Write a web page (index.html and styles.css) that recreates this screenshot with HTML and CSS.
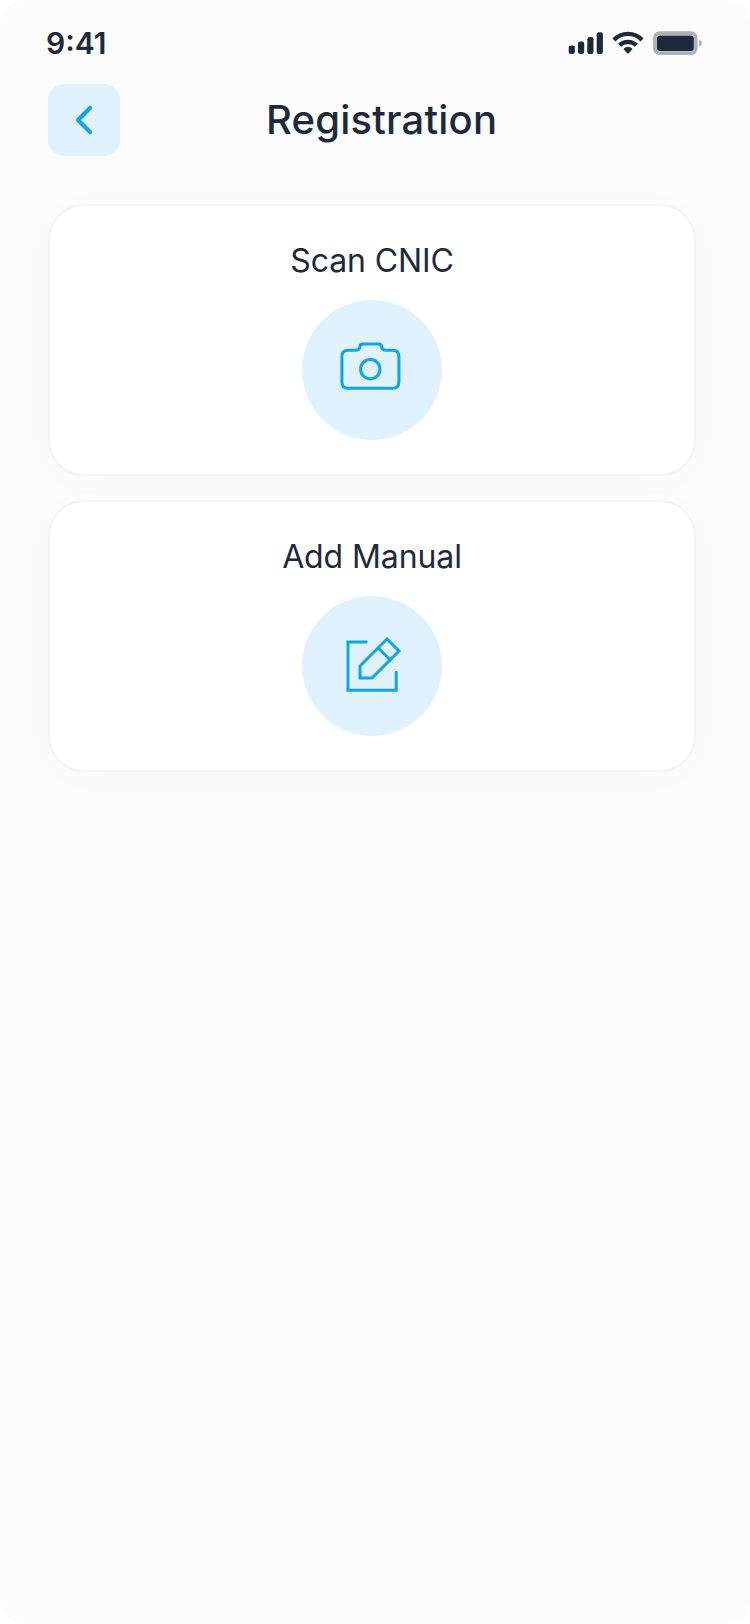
FILE: index.html
```html
<!DOCTYPE html>
<html lang="en">
<head>
<meta charset="utf-8">
<title>Registration</title>
<link rel="stylesheet" href="styles.css">
</head>
<body>
<div class="screen">
  <div class="status-bar">
    <span class="time">9:41</span>
    <svg class="status-icons" width="136" height="26" viewBox="568 30 136 26">
      <g fill="#1e293b">
        <rect x="568.7" y="45.5" width="6.2" height="8.500" rx="2.200"/>
        <rect x="578" y="41.500" width="6.200" height="12.500" rx="2.200"/>
        <rect x="587.300" y="37" width="6.200" height="17" rx="2.200"/>
        <rect x="596.700" y="32.200" width="6.200" height="21.800" rx="2.200"/>
        <path d="M623.800 49Q628 45.400 632.200 49L628.600 53Q628 53.700 627.400 53Z" stroke="#1e293b" stroke-width=".8" stroke-linejoin="round"/>
        <rect x="657" y="35.600" width="37" height="15.400" rx="3"/>
      </g>
      <g fill="none" stroke="#1e293b" stroke-width="4.300">
        <path d="M614 40A19 19 0 0 1 642 40"/>
        <path d="M619.600 45.300A12 12 0 0 1 636.400 45.300"/>
      </g>
      <rect x="655" y="33.200" width="40.600" height="20" rx="4.500" fill="none" stroke="#adb1b9" stroke-width="3.800"/>
      <path d="M699.200 39.600Q702 40.700 702 43.100Q702 45.600 699.200 46.800Z" fill="#adb1b9"/>
    </svg>
  </div>
  <header class="header">
    <button class="back" aria-label="Back">
      <svg width="24" height="36" viewBox="0 0 24 36"><path d="M18 6L6 18L18 30" fill="none" stroke="#0ea5e9" stroke-width="4.200" stroke-linecap="round" stroke-linejoin="round"/></svg>
    </button>
    <h1 class="title">Registration</h1>
  </header>
  <main class="options">
    <section class="card">
      <h2 class="label">Scan CNIC</h2>
      <div class="circle">
        <svg width="140" height="140" viewBox="302 300 140 140" fill="none" stroke="#0ea5e9" stroke-width="3">
          <path d="M348 350.200H355Q359.800 350.200 359.800 347Q359.800 343.900 363 343.900H378.500Q381.700 343.900 381.700 347Q381.700 350.200 386.500 350.200H392.500Q398.900 350.200 398.900 356.500V382Q398.900 388.200 392.500 388.200H348Q341.900 388.200 341.900 382V356.500Q341.900 350.200 348 350.200Z"/>
          <circle cx="370.300" cy="369.200" r="9.700"/>
        </svg>
      </div>
    </section>
    <section class="card">
      <h2 class="label">Add Manual</h2>
      <div class="circle">
        <svg width="140" height="140" viewBox="302 596 140 140" fill="none" stroke="#0ea5e9" stroke-width="3" stroke-linejoin="miter" stroke-linecap="round">
          <path d="M366.200 642H348V690.200H396.200V672.200"/>
          <path d="M387 639L399 651L372 678H360V666ZM378.200 648L390 659.800"/>
        </svg>
      </div>
    </section>
  </main>
</div>
</body>
</html>
```
FILE: styles.css
```css
* { box-sizing: border-box; }
body {
  margin: 0;
  background: #fff;
  color: #1e293b;
  font-family: Inter, "Liberation Sans", sans-serif;
}
.screen {
  width: 750px;
  height: 1624px;
  background: #fcfcfc;
  border-radius: 24px;
  overflow: hidden;
}
.status-bar {
  display: flex;
  justify-content: space-between;
  align-items: center;
  height: 84px;
  padding: 2px 46px 0 46px;
}
.time {
  font-size: 30px;
  font-weight: 600;
  line-height: 36px;
}
.header {
  display: flex;
  align-items: center;
  height: 72px;
  padding-left: 48px;
}
.back {
  display: flex;
  align-items: center;
  justify-content: center;
  width: 72px;
  height: 72px;
  padding: 0;
  border: 0;
  border-radius: 16px;
  background: #e0f2fe;
}
.title {
  margin: 0 0 0 146px;
  font-size: 40px;
  font-weight: 500;
  line-height: 48px;
  letter-spacing: 0.2px;
}
.options {
  display: flex;
  flex-direction: column;
  gap: 24px;
  padding: 48px 54px 0 48px;
}
.card {
  display: flex;
  flex-direction: column;
  align-items: center;
  gap: 19px;
  height: 272px;
  padding-top: 35px;
  border: 2px solid #f3f4f8;
  border-radius: 36px;
  background: #fff;
  box-shadow: 0 4px 50px rgba(0, 0, 0, 0.014);
}
.label {
  margin: 0;
  font-size: 32px;
  font-weight: 400;
  line-height: 40px;
  letter-spacing: -0.1px;
}
.circle {
  width: 140px;
  height: 140px;
  border-radius: 50%;
  background: #e0f2fe;
}
.circle svg { display: block; }
```
